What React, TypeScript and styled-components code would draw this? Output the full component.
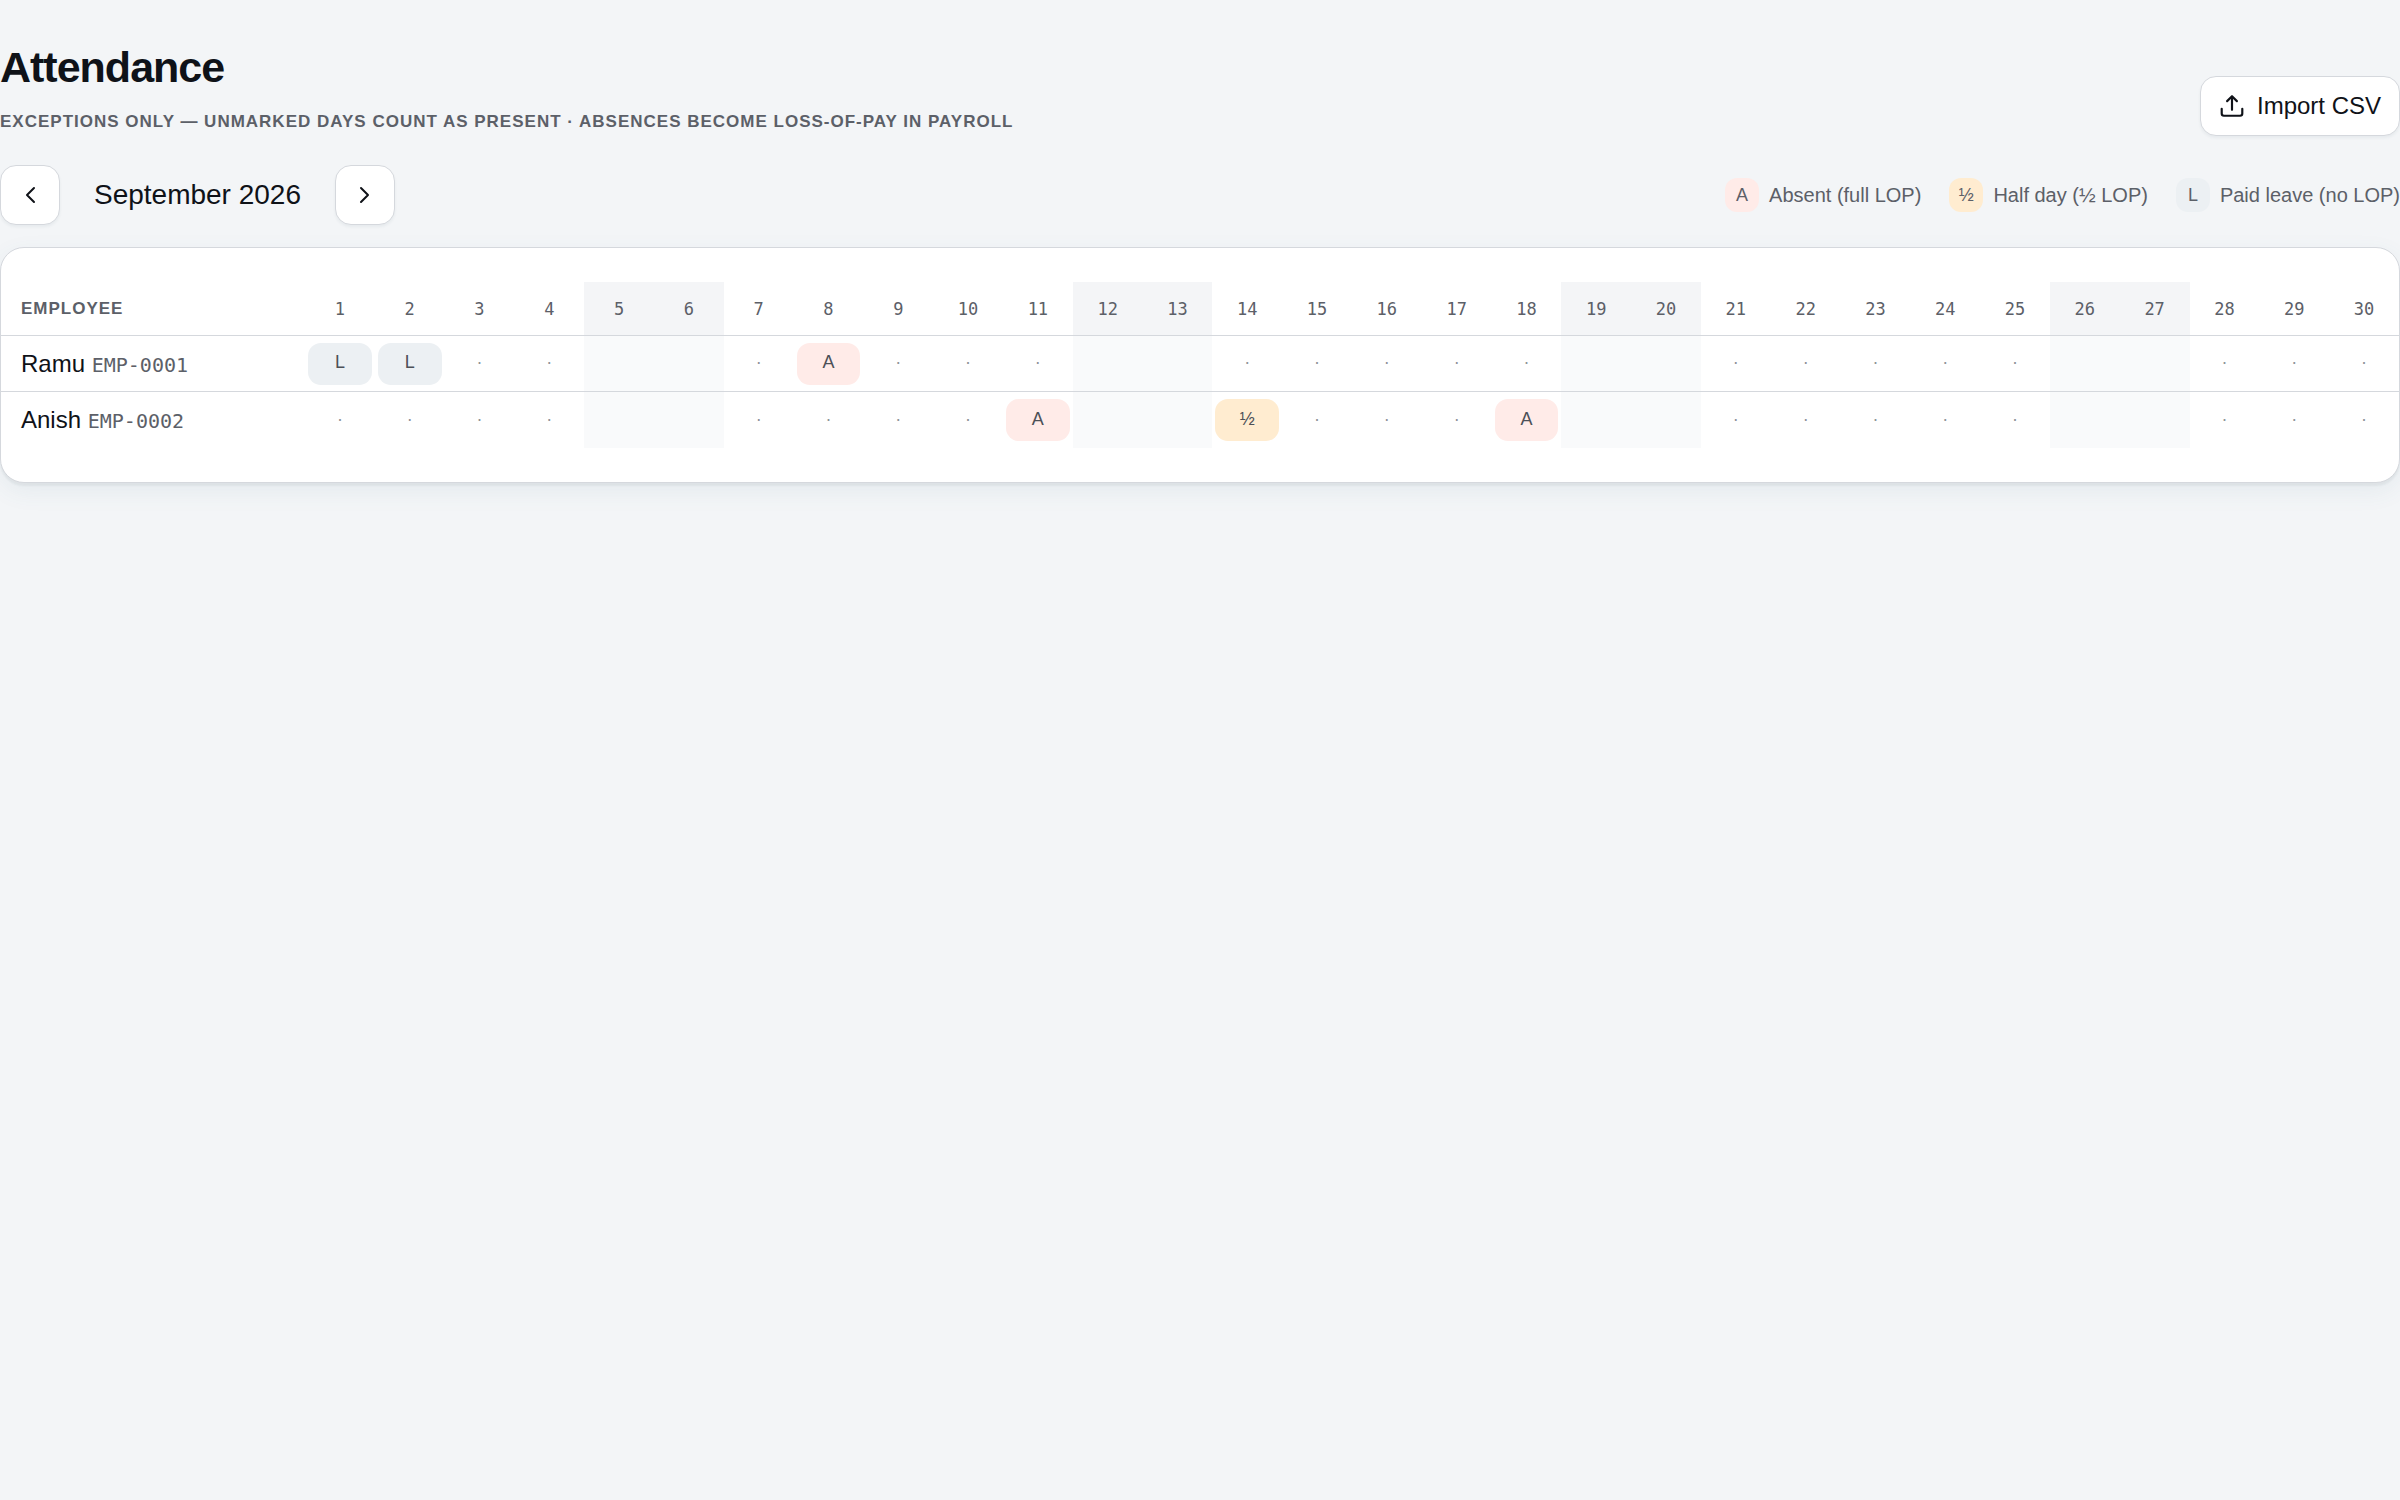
import React, { useState } from "react";
import styled, { createGlobalStyle } from "styled-components";

type Mark = "A" | "½" | "L";

const tones: Record<Mark, string> = { A: "#ffebe8", "½": "#ffecd0", L: "#ecf0f3" };
const ink = "#0f1218";
const muted = "#5c6068";
const line = "#d5d8dd";
const sans = `"Liberation Sans", Arial, sans-serif`;
const mono = `"DejaVu Sans Mono", monospace`;

const GlobalStyle = createGlobalStyle`
  *, *::before, *::after { box-sizing: border-box; }
  body {
    margin: 0;
    background: #f3f5f7;
    color: ${ink};
    font-family: ${sans};
    -webkit-font-smoothing: antialiased;
  }
  button { font: inherit; color: inherit; cursor: pointer; }
`;

const Page = styled.main`
  display: flex;
  flex-direction: column;
  min-height: 100vh;
  padding-top: 39px;
`;

const Header = styled.header`
  display: flex;
  align-items: flex-end;
  justify-content: space-between;
`;

const Title = styled.h1`
  margin: 0;
  font-size: 43px;
  line-height: 56px;
  font-weight: 700;
  letter-spacing: -1px;
`;

const Subtitle = styled.p`
  margin: 13px 0 0;
  color: ${muted};
  font-size: 17px;
  line-height: 28px;
  font-weight: 700;
  letter-spacing: 1px;
  text-transform: uppercase;
`;

const Button = styled.button<{ $square?: boolean }>`
  display: inline-flex;
  align-items: center;
  justify-content: center;
  gap: 12px;
  height: 60px;
  width: ${(p) => (p.$square ? "60px" : "auto")};
  padding: ${(p) => (p.$square ? "0" : "0 18px")};
  border: 1px solid ${line};
  border-radius: 16px;
  background: #fff;
  font-size: 24px;
  box-shadow: 0 2px 3px rgba(30, 60, 90, 0.06);
`;

const Toolbar = styled.div`
  display: flex;
  align-items: center;
  justify-content: space-between;
  margin: 29px 0 22px;
`;

const MonthNav = styled.nav`
  display: flex;
  align-items: center;
`;

const Month = styled.span`
  width: 275px;
  text-align: center;
  font-size: 28px;
  line-height: 32px;
`;

const Legend = styled.ul`
  display: flex;
  gap: 28px;
  margin: 0;
  padding: 0;
  list-style: none;
  color: ${muted};
  font-size: 20px;
`;

const LegendItem = styled.li`
  display: flex;
  align-items: center;
  gap: 10px;
`;

const Swatch = styled.span<{ $mark: Mark }>`
  display: flex;
  align-items: center;
  justify-content: center;
  width: 34px;
  height: 34px;
  border-radius: 12px;
  background: ${(p) => tones[p.$mark]};
  font-size: 18px;
`;

const Card = styled.section`
  padding: 34px 0;
  border: 1px solid ${line};
  border-radius: 24px;
  background: #fff;
  box-shadow: 0 3px 2px rgba(15, 30, 45, 0.05), 0 8px 24px rgba(60, 110, 140, 0.08);
`;

const Table = styled.table`
  width: 100%;
  table-layout: fixed;
  border-collapse: separate;
  border-spacing: 0;
`;

const NameCol = styled.col`
  width: 304px;
`;

const EmployeeHead = styled.th`
  height: 54px;
  padding: 0 20px;
  border-bottom: 1px solid ${line};
  color: ${muted};
  font-size: 17px;
  font-weight: 700;
  letter-spacing: 1px;
  text-align: left;
  text-transform: uppercase;
`;

const DayHead = styled.th<{ $weekend: boolean }>`
  padding: 0;
  border-bottom: 1px solid ${line};
  background: ${(p) => (p.$weekend ? "#f4f5f7" : "transparent")};
  color: ${muted};
  font-family: ${mono};
  font-size: 17px;
  font-weight: 400;
`;

const Row = styled.tr`
  &:not(:last-child) > * {
    border-bottom: 1px solid ${line};
  }
`;

const Name = styled.th`
  height: 56px;
  padding: 0 20px;
  font-size: 24px;
  font-weight: 400;
  text-align: left;
  white-space: nowrap;
`;

const Code = styled.span`
  color: ${muted};
  font-family: ${mono};
  font-size: 20px;
`;

const Day = styled.td<{ $weekend: boolean }>`
  padding: 0 3px;
  background: ${(p) => (p.$weekend ? "#f9fafb" : "transparent")};
`;

const Cell = styled.button<{ $mark?: Mark }>`
  display: block;
  width: 100%;
  height: 42px;
  padding: 0 0 2px;
  border: 0;
  border-radius: 13px;
  background: ${(p) => (p.$mark ? tones[p.$mark] : "transparent")};
  color: ${(p) => (p.$mark ? "#4c5057" : "#8f9399")};
  font-size: 18px;
`;

const Icon = styled.svg`
  width: 26px;
  height: 26px;
  fill: none;
  stroke: currentColor;
  stroke-width: 2;
  stroke-linecap: round;
  stroke-linejoin: round;
`;

const legend: { mark: Mark; label: string }[] = [
  { mark: "A", label: "Absent (full LOP)" },
  { mark: "½", label: "Half day (½ LOP)" },
  { mark: "L", label: "Paid leave (no LOP)" },
];

const employees: { name: string; code: string; marks: Record<number, Mark> }[] = [
  { name: "Ramu", code: "EMP-0001", marks: { 1: "L", 2: "L", 8: "A" } },
  { name: "Anish", code: "EMP-0002", marks: { 11: "A", 14: "½", 18: "A" } },
];

const cycle: (Mark | undefined)[] = [undefined, "A", "½", "L"];
const days = Array.from({ length: 30 }, (_, i) => i + 1);
const isWeekend = (day: number) => day % 7 === 5 || day % 7 === 6;

export default function App() {
  const [marks, setMarks] = useState<Record<number, Mark | undefined>[]>(employees.map((e) => e.marks));

  const advance = (row: number, day: number) =>
    setMarks((all) =>
      all.map((m, i) => (i === row ? { ...m, [day]: cycle[(cycle.indexOf(m[day]) + 1) % cycle.length] } : m))
    );

  return (
    <>
      <GlobalStyle />
      <Page>
        <Header>
          <div>
            <Title>Attendance</Title>
            <Subtitle>Exceptions only — unmarked days count as present · absences become loss-of-pay in payroll</Subtitle>
          </div>
          <Button type="button">
            <Icon viewBox="0 0 24 24" aria-hidden="true">
              <path d="M12 15.500V3M7.500 7.500L12 3L16.500 7.500M2.500 14.500V19A2 2 0 0 0 4.500 21H19.500A2 2 0 0 0 21.500 19V14.500" />
            </Icon>
            Import CSV
          </Button>
        </Header>

        <Toolbar>
          <MonthNav aria-label="Month">
            <Button type="button" $square aria-label="Previous month">
              <Icon viewBox="0 0 26 26" aria-hidden="true">
                <path d="M17 6L10 13L17 20" />
              </Icon>
            </Button>
            <Month>September 2026</Month>
            <Button type="button" $square aria-label="Next month">
              <Icon viewBox="0 0 26 26" aria-hidden="true">
                <path d="M9 6L16 13L9 20" />
              </Icon>
            </Button>
          </MonthNav>
          <Legend>
            {legend.map(({ mark, label }) => (
              <LegendItem key={mark}>
                <Swatch $mark={mark}>{mark}</Swatch>
                {label}
              </LegendItem>
            ))}
          </Legend>
        </Toolbar>

        <Card>
          <Table>
            <colgroup>
              <NameCol />
              {days.map((d) => (
                <col key={d} />
              ))}
            </colgroup>
            <thead>
              <tr>
                <EmployeeHead scope="col">Employee</EmployeeHead>
                {days.map((d) => (
                  <DayHead key={d} scope="col" $weekend={isWeekend(d)}>
                    {d}
                  </DayHead>
                ))}
              </tr>
            </thead>
            <tbody>
              {employees.map((e, row) => (
                <Row key={e.code}>
                  <Name scope="row">
                    {e.name} <Code>{e.code}</Code>
                  </Name>
                  {days.map((d) => (
                    <Day key={d} $weekend={isWeekend(d)}>
                      {!isWeekend(d) && (
                        <Cell
                          type="button"
                          $mark={marks[row][d]}
                          aria-label={`${e.name}, day ${d}`}
                          onClick={() => advance(row, d)}
                        >
                          {marks[row][d] ?? "·"}
                        </Cell>
                      )}
                    </Day>
                  ))}
                </Row>
              ))}
            </tbody>
          </Table>
        </Card>
      </Page>
    </>
  );
}
